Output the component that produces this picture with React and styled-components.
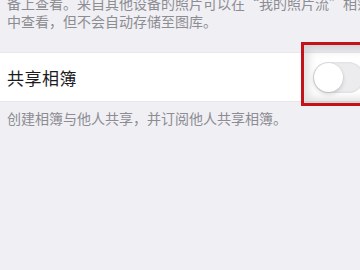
import React from 'react';
import styled, { createGlobalStyle } from 'styled-components';

const GlobalStyle = createGlobalStyle`
  html, body {
    margin: 0;
    padding: 0;
    background: #efeff4;
    overflow: hidden;
  }
  body {
    font-family: 'Noto Sans CJK SC', 'Noto Sans', sans-serif;
  }
`

const Page = styled.div`
  position: relative;
  width: 360px;
  height: 270px;
  overflow: hidden;
  background: #efeff4;
`

const Note = styled.div`
  padding: 0 7px;
  font-size: 14px;
  line-height: 18px;
  color: #8c8c91;
`

const NoteLine = styled.div`
  white-space: nowrap;
`

const TopNote = styled(Note)`
  padding-top: 0;
  margin-top: -6px;
  height: 58px;
`

const Cell = styled.div`
  display: flex;
  align-items: center;
  justify-content: space-between;
  height: 48px;
  margin-right: -6px;
  padding-left: 7px;
  padding-right: 2px;
  background: #fff;
  border-top: 1px solid #e8e8ec;
  border-bottom: 1px solid #e8e8ec;
`

const CellTitle = styled.span`
  font-size: 17px;
  color: #1c1c1e;
  letter-spacing: 0.5px;
`

const Toggle = styled.div`
  position: relative;
  width: 51px;
  height: 31px;
  border-radius: 16px;
  background: #ececef;
  box-shadow: inset 0 0 0 1.5px #e4e4e7;
`

const Knob = styled.div`
  position: absolute;
  top: 1px;
  left: 1px;
  width: 29px;
  height: 29px;
  border-radius: 50%;
  background: #fff;
  box-shadow: 0 2px 4px rgba(0, 0, 0, 0.16), 0 0 0 0.5px rgba(0, 0, 0, 0.06);
`

const Footer = styled(Note)`
  padding-top: 7px;
`

const Highlight = styled.div`
  position: absolute;
  left: 301px;
  top: 42px;
  width: 80px;
  height: 58px;
  border: 3px solid #c4121a;
  box-shadow: inset 0 0 9px 5px rgba(0, 0, 0, 0.12);
`

const App = () => {
  return (
    <Page>
      <GlobalStyle />
      <TopNote>
        <NoteLine>备上查看。来自其他设备的照片可以在“我的照片流”相簿</NoteLine>
        <NoteLine>中查看，但不会自动存储至图库。</NoteLine>
      </TopNote>
      <Cell>
        <CellTitle>共享相簿</CellTitle>
        <Toggle>
          <Knob />
        </Toggle>
      </Cell>
      <Footer>创建相簿与他人共享，并订阅他人共享相簿。</Footer>
      <Highlight />
    </Page>
  )
}

export default App;
